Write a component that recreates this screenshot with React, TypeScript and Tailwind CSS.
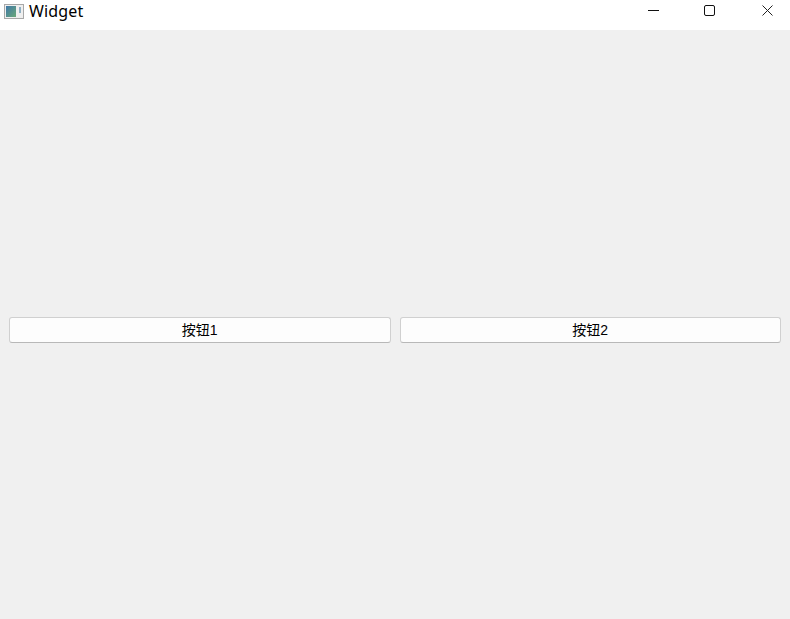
import React from 'react';

const AppIcon: React.FC = () => (
  <svg width="20" height="15" viewBox="0 0 20 15" className="block">
    <defs>
      <linearGradient id="pane" x1="0" y1="0" x2="1" y2="1">
        <stop offset="0" stopColor="#3f78a8" />
        <stop offset="1" stopColor="#6aa878" />
      </linearGradient>
    </defs>
    <rect x="0.5" y="0.5" width="19" height="14" fill="#efefef" stroke="#a8a8a8" />
    <rect x="2" y="2" width="10" height="11" fill="url(#pane)" />
    <rect x="15" y="3" width="2" height="6" fill="#8fb0c4" />
  </svg>
);

const PushButton: React.FC<{ label: string }> = ({ label }) => (
  <button className="flex-1 h-[26px] bg-[#fdfdfd] border border-[#d0d0d0] border-b-[#b8b8b8] rounded-[3px] text-[14px] leading-none text-black text-center">
    {label}
  </button>
);

export default function App() {
  return (
    <div className="w-[790px] h-[619px] flex flex-col bg-[#f0f0f0] font-['Liberation_Sans','Noto_Sans_CJK_SC',sans-serif]">
      <div className="h-[30px] bg-white flex items-start justify-between">
        <div className="flex items-center gap-[5px] pl-[4px] pt-[3px]">
          <AppIcon />
          <span className="font-['Noto_Sans','Noto_Sans_CJK_SC',sans-serif] text-[16px] leading-[16px] tracking-[0.15px] text-black">Widget</span>
        </div>
        <div className="flex items-start pt-[5px] pr-[17px]">
          <svg width="11" height="11" viewBox="0 0 11 11"><path d="M0 5.5h11" stroke="#111" fill="none" /></svg>
          <svg width="11" height="11" viewBox="0 0 11 11" className="ml-[45px]"><rect x="0.5" y="0.5" width="10" height="10" rx="1.5" stroke="#111" fill="none" /></svg>
          <svg width="11" height="11" viewBox="0 0 11 11" className="ml-[47px]"><path d="M0.5 0.5l10 10M10.5 0.5l-10 10" stroke="#222" fill="none" /></svg>
        </div>
      </div>
      <div className="flex-1 flex items-center gap-[9px] px-[9px] pt-[11px]">
        <PushButton label="按钮1" />
        <PushButton label="按钮2" />
      </div>
    </div>
  );
}
